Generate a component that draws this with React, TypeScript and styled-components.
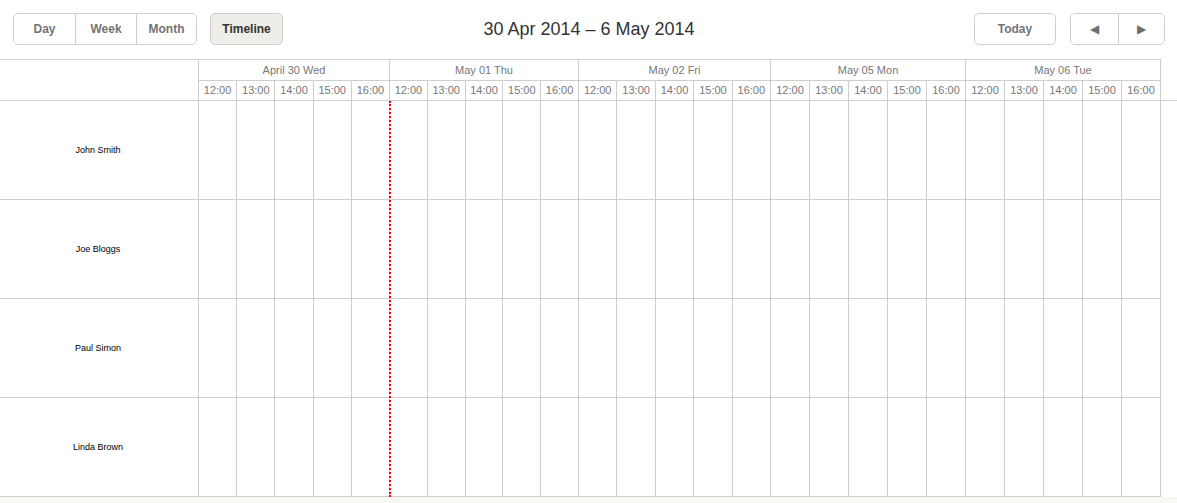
import styled, { createGlobalStyle } from "styled-components"

const GlobalStyle = createGlobalStyle`
    html, body {
        margin: 0;
        padding: 0;
        background: #ffffff;
        font-family: "Liberation Sans", Arial, sans-serif;
    }
`

const days = [
    { label: "April 30 Wed", width: 191 },
    { label: "May 01 Thu", width: 189 },
    { label: "May 02 Fri", width: 192 },
    { label: "May 05 Mon", width: 195 },
    { label: "May 06 Tue", width: 195 },
]
const hours = ["12:00", "13:00", "14:00", "15:00", "16:00"]
const people = ["John Smith", "Joe Bloggs", "Paul Simon", "Linda Brown"]

const App = () => {
    return (
        <Page>
            <GlobalStyle />
            <Toolbar>
                <ToolGroup>
                    <ButtonGroup>
                        <Button $w={61}>Day</Button>
                        <Button $w={61}>Week</Button>
                        <Button $w={60}>Month</Button>
                    </ButtonGroup>
                    <Button $w={73} $active $single>Timeline</Button>
                </ToolGroup>
                <Title>30 Apr 2014 – 6 May 2014</Title>
                <ToolGroup $right>
                    <Button $w={82} $single>Today</Button>
                    <ButtonGroup>
                        <Button $w={47}><Arrow>&#9664;</Arrow></Button>
                        <Button $w={46}><Arrow>&#9654;</Arrow></Button>
                    </ButtonGroup>
                </ToolGroup>
            </Toolbar>
            <Scheduler>
                <HeaderRow>
                    <Corner />
                    {days.map((day) => (
                        <DayHead key={day.label} $w={day.width}>
                            <DayLabel>{day.label}</DayLabel>
                            <HourRow>
                                {hours.map((h) => (
                                    <HourCell key={h}>{h}</HourCell>
                                ))}
                            </HourRow>
                        </DayHead>
                    ))}
                </HeaderRow>
                <Body>
                    {people.map((name) => (
                        <Row key={name}>
                            <NameCell>{name}</NameCell>
                            {days.map((day) => (
                                <DayBody key={day.label} $w={day.width}>
                                    {hours.map((h) => (
                                        <Slot key={h} />
                                    ))}
                                </DayBody>
                            ))}
                        </Row>
                    ))}
                    <NowMarker />
                </Body>
                <Footer />
            </Scheduler>
        </Page>
    )
}

export default App

const Page = styled.div`
    width: 1177px;
    height: 503px;
    overflow: hidden;
    background: #ffffff;
`

const Toolbar = styled.div`
    display: grid;
    grid-template-columns: 1fr auto 1fr;
    align-items: center;
    padding: 13px 12px 0 13px;
    height: 32px;
`

const ToolGroup = styled.div<{ $right?: boolean }>`
    display: flex;
    gap: ${(p) => (p.$right ? 14 : 13)}px;
    justify-content: ${(p) => (p.$right ? "flex-end" : "flex-start")};
`

const ButtonGroup = styled.div`
    display: flex;
    border: 1px solid #cecece;
    border-radius: 5px;
    overflow: hidden;
    height: 30px;
    & > div + div {
        border-left: 1px solid #cecece;
    }
`

const Button = styled.div<{ $w: number; $active?: boolean; $single?: boolean }>`
    box-sizing: border-box;
    width: ${(p) => p.$w}px;
    height: ${(p) => (p.$single ? 32 : 30)}px;
    display: flex;
    align-items: center;
    justify-content: center;
    font-size: 12px;
    font-weight: bold;
    color: ${(p) => (p.$active ? "#333333" : "#747474")};
    background: ${(p) => (p.$active ? "#efede8" : "#ffffff")};
    ${(p) => (p.$single ? "border: 1px solid #cecece; border-radius: 5px;" : "")}
`

const Arrow = styled.span`
    font-size: 12px;
    color: #6f6f6f;
    font-family: "DejaVu Sans", sans-serif;
`

const Title = styled.div`
    font-size: 18px;
    color: #333333;
    text-align: center;
    white-space: nowrap;
`

const Scheduler = styled.div`
    margin-top: 14px;
`

const HeaderRow = styled.div`
    display: flex;
    height: 41px;
`

const Corner = styled.div`
    box-sizing: border-box;
    width: 199px;
    border-top: 1px solid #cecece;
    border-right: 1px solid #cecece;
`

const DayHead = styled.div<{ $w: number }>`
    box-sizing: border-box;
    width: ${(p) => p.$w}px;
    border-top: 1px solid #cecece;
    border-right: 1px solid #cecece;
    display: flex;
    flex-direction: column;
`

const DayLabel = styled.div`
    height: 20px;
    line-height: 20px;
    text-align: center;
    font-size: 11px;
    color: #777777;
`

const HourRow = styled.div`
    display: flex;
    flex: 1;
    border-top: 1px solid #cecece;
`

const HourCell = styled.div`
    flex: 1;
    font-size: 11px;
    color: #777777;
    text-align: center;
    line-height: 19px;
    & + & {
        border-left: 1px solid #cecece;
    }
`

const Body = styled.div`
    position: relative;
    border-top: 1px solid #cecece;
`

const Row = styled.div`
    display: flex;
    height: 99px;
    box-sizing: border-box;
    width: 1161px;
    border-bottom: 1px solid #cecece;
`

const NameCell = styled.div`
    box-sizing: border-box;
    width: 199px;
    border-right: 1px solid #cecece;
    display: flex;
    align-items: center;
    justify-content: center;
    font-size: 9px;
    color: #000000;
    padding-right: 2px;
`

const DayBody = styled.div<{ $w: number }>`
    box-sizing: border-box;
    display: flex;
    width: ${(p) => p.$w}px;
    border-right: 1px solid #cecece;
`

const Slot = styled.div`
    flex: 1;
    & + & {
        border-left: 1px solid #cecece;
    }
`

const NowMarker = styled.div`
    position: absolute;
    top: 0;
    bottom: 0;
    left: 389px;
    width: 0;
    border-left: 2px dotted #ff0000;
`

const Footer = styled.div`
    height: 10px;
    background: #f8f8f2;
`
